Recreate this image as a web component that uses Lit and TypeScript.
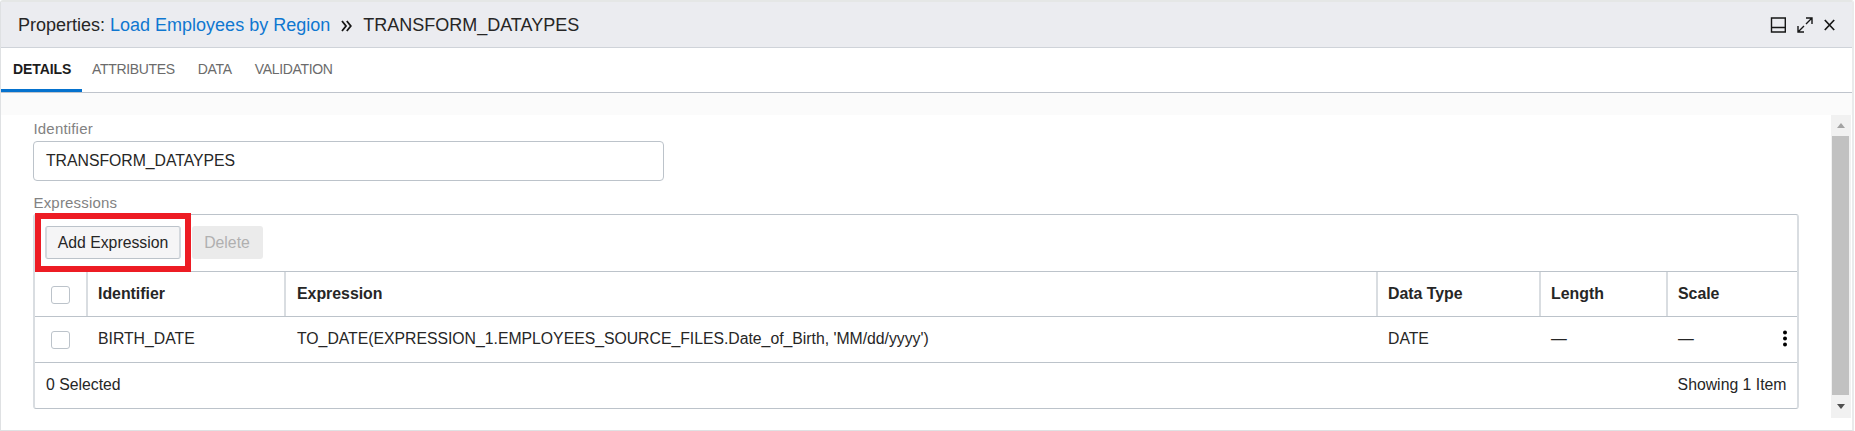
import { LitElement, html, css, svg } from "lit";
import { customElement, state } from "lit/decorators.js";

interface ExpressionRow {
  identifier: string;
  expression: string;
  dataType: string;
  length: string;
  scale: string;
}

@customElement("app-root")
export class AppRoot extends LitElement {
  static styles = css`
    :host {
      display: block;
      height: 431px;
      background: #fff;
      font-family: "Liberation Sans", Arial, sans-serif;
      font-size: 15.8px;
      color: #262626;
      overflow: hidden;
    }
    * { box-sizing: border-box; }
    .panel {
      height: 431px;
      width: 1854px;
      border: 1px solid #dfe1e3;
      border-top: 2px solid #e5e7e6;
      border-right: 2px solid #e9eaeb;
      border-radius: 3px 3px 0 0;
      display: flex;
      flex-direction: column;
    }
    .header {
      height: 46px;
      flex: none;
      background: #ebecf0;
      border-bottom: 1px solid #cfd3d9;
      display: flex;
      align-items: center;
      padding: 1px 17px 0 17px;
      font-size: 18px;
      white-space: pre;
    }
    .link { color: #0f77d0; text-decoration: none; margin-left: 5px; }
    .sep { margin: 1px 11px 0 11px; display: block; }
    .tools { margin-left: auto; display: flex; align-items: center; gap: 11px; }
    svg { display: block; }
    .tabs {
      height: 45px;
      flex: none;
      display: flex;
      border-bottom: 1px solid #bfc4cc;
      font-size: 14px;
      color: #6b6b6b;
    }
    .tab { padding: 0 11px 0 0; line-height: 43px; height: 44px; margin-right: 12px; letter-spacing: -0.33px; }
    .tab.active {
      width: 81px;
      padding: 0 0 0 12px;
      margin-right: 10px;
      color: #1c1c1c;
      font-weight: 700;
      letter-spacing: -0.1px;
      border-bottom: 3px solid #0572ce;
    }
    .strip { height: 22px; flex: none; background: #fbfbfb; }
    .body { display: flex; flex: 1; min-height: 0; }
    .content { flex: 1; padding: 4px 32px 0 32px; }
    .label { font-size: 15px; line-height: 20px; height: 22px; color: #828282; letter-spacing: 0.18px; padding-left: 0.5px; }
    .input {
      width: 631px;
      height: 40px;
      border: 1px solid #bcc3ca;
      border-radius: 4px;
      padding: 0 12px;
      line-height: 37px;
      letter-spacing: -0.03px;
    }
    .label.second { margin-top: 11px; line-height: 21px; }
    .table {
      border: 1px solid #bcc3ca;
      border-left: 2px solid #d9dde1;
      border-right: 2px solid #d9dde1;
      border-radius: 3px;
      height: 195px;
    }
    .toolbar {
      height: 56px;
      display: flex;
      padding: 11px 0 0 10px;
      gap: 10.5px;
    }
    .add {
      position: relative;
      width: 136px;
      height: 33px;
      border: 1px solid #bcc3ca;
      border-left: 2px solid #d3d8dd;
      border-right: 2px solid #d3d8dd;
      border-radius: 3px;
      background: #f5f5f6;
      text-align: center;
      line-height: 31px;
    }
    .callout {
      position: absolute;
      left: -12px;
      top: -14px;
      width: 156px;
      height: 59px;
      border: 6px solid #ed1c24;
    }
    .delete {
      width: 71px;
      height: 33px;
      border-radius: 3px;
      background: #ebebeb;
      color: #b0b0b0;
      text-align: center;
      line-height: 33px;
    }
    .row {
      display: grid;
      grid-template-columns: 53px 198px 1092px 163px 127px 1fr;
      border-top: 1px solid #bcc3ca;
      height: 46px;
      line-height: 44px;
    }
    .row.head { font-weight: 700; height: 45px; line-height: 43px; font-size: 15.9px; }
    .cell { padding-left: 10px; display: flex; white-space: pre; letter-spacing: -0.02px; }
    .cell:nth-child(3) { padding-left: 11px; }
    .cell.check { padding: 14px 0 0 16px; }
    .head .cell { border-right: 2px solid #d9dde1; }
    .head .cell:last-child { border-right: 0; }
    .box { width: 19px; height: 18px; border: 1px solid #bcc3ca; border-radius: 3px; }
    .dots { margin: 13px 10px 0 auto; }
    .foot {
      border-top: 1px solid #bcc3ca;
      display: flex;
      justify-content: space-between;
      padding: 0 10.5px 0 11px;
      line-height: 43px;
    }
    .scroll { width: 20px; height: 303px; margin-right: 1px; background: #f1f1f1; display: flex; flex-direction: column; align-items: center; }
    .arrow { height: 21px; display: flex; align-items: center; }
    .thumb { width: 17px; margin-right: 1px; flex: 1; background: #c1c1c1; }
    .arrow.down { height: 23px; }
  `;

  @state() private tab = "DETAILS";

  private tabs = ["DETAILS", "ATTRIBUTES", "DATA", "VALIDATION"];

  private rows: ExpressionRow[] = [
    {
      identifier: "BIRTH_DATE",
      expression: "TO_DATE(EXPRESSION_1.EMPLOYEES_SOURCE_FILES.Date_of_Birth, 'MM/dd/yyyy')",
      dataType: "DATE",
      length: "—",
      scale: "—",
    },
  ];

  render() {
    return html`
      <div class="panel">
        <div class="header">
          <span>Properties:</span><a class="link">Load Employees by Region</a>
          ${svg`<svg class="sep" width="11" height="12" viewBox="0 0 11 12" fill="none" stroke="#161616" stroke-width="1.8"><path d="M1 1l4 5-4 5M5.8 1l4 5-4 5"/></svg>`}
          <span>TRANSFORM_DATAYPES</span>
          <div class="tools">
            <svg width="16" height="16" viewBox="0 0 16 16" fill="none" stroke="#161616" stroke-width="1.4"><path d="M1.5 1h13.8v14H1.5zM1.5 10.5h13.8"/></svg>
            <svg width="16" height="16" viewBox="0 0 16 16" fill="none" stroke="#161616" stroke-width="1.4"><path d="M9 1h6v6M15 1L9 7M7 15H1V9M1 15l6-6"/></svg>
            <svg width="11" height="12" viewBox="0 0 11 12" fill="none" stroke="#161616" stroke-width="1.7"><path d="M.8 1l9.4 10M10.2 1L.8 11"/></svg>
          </div>
        </div>
        <div class="tabs">
          ${this.tabs.map(
            (t) => html`<div class="tab ${t === this.tab ? "active" : ""}" @click=${() => (this.tab = t)}>${t}</div>`
          )}
        </div>
        <div class="strip"></div>
        <div class="body">
          <div class="content">
            <div class="label">Identifier</div>
            <div class="input">TRANSFORM_DATAYPES</div>
            <div class="label second">Expressions</div>
            <div class="table">
              <div class="toolbar">
                <div class="add">Add Expression<div class="callout"></div></div>
                <div class="delete">Delete</div>
              </div>
              <div class="row head">
                <div class="cell check"><div class="box"></div></div>
                ${["Identifier", "Expression", "Data Type", "Length", "Scale"].map(
                  (h) => html`<div class="cell">${h}</div>`
                )}
              </div>
              ${this.rows.map(
                (r) => html`<div class="row">
                  <div class="cell check"><div class="box"></div></div>
                  <div class="cell">${r.identifier}</div>
                  <div class="cell">${r.expression}</div>
                  <div class="cell">${r.dataType}</div>
                  <div class="cell">${r.length}</div>
                  <div class="cell">${r.scale}<svg class="dots" width="4" height="17" viewBox="0 0 4 17" fill="#000"><circle cx="2" cy="2.5" r="2"/><circle cx="2" cy="8.5" r="2"/><circle cx="2" cy="14.5" r="2"/></svg></div>
                </div>`
              )}
              <div class="foot"><span>0 Selected</span><span>Showing 1 Item</span></div>
            </div>
          </div>
          <div class="scroll">
            <div class="arrow"><svg width="8" height="5" viewBox="0 0 8 5" fill="#a3a3a3"><path d="M0 5L4 0l4 5z"/></svg></div>
            <div class="thumb"></div>
            <div class="arrow down"><svg width="8" height="5" viewBox="0 0 8 5" fill="#505050"><path d="M0 0l4 5 4-5z"/></svg></div>
          </div>
        </div>
      </div>
    `;
  }
}
